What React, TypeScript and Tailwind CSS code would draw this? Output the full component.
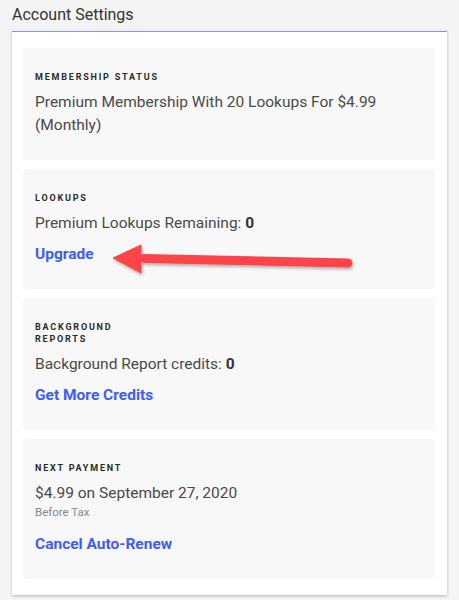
import type { ReactNode } from "react";

function Label({ children }: { children: ReactNode }) {
  return (
    <div className="max-w-[130px] text-[9px] leading-[12px] font-bold tracking-[0.2em] uppercase text-[#2a2a2a]">
      {children}
    </div>
  );
}

function Panel({ children }: { children: ReactNode }) {
  return (
    <div className="relative bg-[#f8f8f8] rounded px-3 pt-[23px] pb-[23px]">
      {children}
    </div>
  );
}

function Body({ children }: { children: ReactNode }) {
  return <p className="mt-2 text-[15.5px] leading-[23px]">{children}</p>;
}

function LinkText({ children, className = "mt-2" }: { children: ReactNode; className?: string }) {
  return (
    <a className={`${className} block text-[15.5px] leading-[23px] font-bold text-[#3d5cfb] cursor-pointer`}>
      {children}
    </a>
  );
}

function Arrow() {
  return (
    <svg
      className="absolute left-[77px] top-[67px]"
      width="262"
      height="52"
      viewBox="0 0 262 52"
    >
      <defs>
        <filter id="sh" x="-10%" y="-40%" width="120%" height="180%">
          <feDropShadow dx="1" dy="2" stdDeviation="1.5" floodColor="#000" floodOpacity="0.3" />
        </filter>
      </defs>
      <g filter="url(#sh)" fill="#fd4448" stroke="#fd4448">
        <line x1="44" y1="22.5" x2="248" y2="27" strokeWidth="9" strokeLinecap="round" />
        <polygon points="13,22 41,9 41,37" strokeWidth="1" strokeLinejoin="round" />
      </g>
    </svg>
  );
}

export default function App() {
  return (
    <div
      className="min-h-[600px] bg-[#f4f4f4] px-3 pt-[5px] text-[#4a4a4a]"
      style={{ fontFamily: "Roboto, 'Liberation Sans', sans-serif" }}
    >
      <h2 className="text-[16px] leading-[20px] text-[#333] mb-[6px]">Account Settings</h2>
      <div className="bg-white border-t border-[#8e97cd] shadow-[0_1px_3px_rgba(0,0,0,0.25)] pl-[11px] pr-3 pt-4 pb-4 flex flex-col gap-[9px]">
        <Panel>
          <Label>Membership Status</Label>
          <Body>Premium Membership With 20 Lookups For $4.99 (Monthly)</Body>
        </Panel>
        <Panel>
          <Label>Lookups</Label>
          <Body>
            Premium Lookups Remaining: <b className="font-bold text-[#333]">0</b>
          </Body>
          <LinkText>Upgrade</LinkText>
          <Arrow />
        </Panel>
        <Panel>
          <Label>Background Reports</Label>
          <Body>
            Background Report credits: <b className="font-bold text-[#333]">0</b>
          </Body>
          <LinkText>Get More Credits</LinkText>
        </Panel>
        <Panel>
          <Label>Next Payment</Label>
          <Body>$4.99 on September 27, 2020</Body>
          <p className="text-[11.5px] leading-[14px] text-[#888]">Before Tax</p>
          <LinkText className="mt-[14px]">Cancel Auto-Renew</LinkText>
        </Panel>
      </div>
    </div>
  );
}
